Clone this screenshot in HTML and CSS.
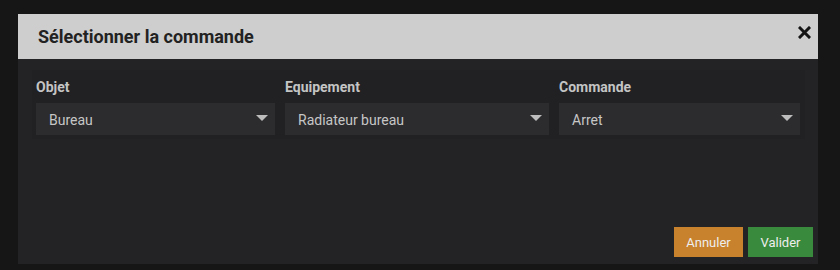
FILE: index.html
```html
<!DOCTYPE html>
<html lang="fr">
<head>
  <meta charset="UTF-8" />
  <meta name="viewport" content="width=device-width, initial-scale=1.0"/>
  <title>Sélectionner la commande</title>
  <link rel="stylesheet" href="styles.css">
</head>
<body>

  <div class="modal">
    <!-- Header -->
    <div class="modal-header">
      <h1>Sélectionner la commande</h1>
      <button class="close" title="Fermer">
        <svg width="13" height="13" viewBox="0 0 13 13">
          <path d="M2 2 L11 11 M11 2 L2 11" stroke="#151515" stroke-width="3" stroke-linecap="square"/>
        </svg>
      </button>
    </div>

    <!-- Body -->
    <div class="modal-body">
      <div class="form-row">
        <div class="form-group">
          <label>Objet</label>
          <div class="select">
            <span>Bureau</span>
            <svg class="caret" width="12" height="6" viewBox="0 0 12 6"><path d="M0 0 L12 0 L6 6 Z" fill="#bdbdbd"/></svg>
          </div>
        </div>
        <div class="form-group">
          <label>Equipement</label>
          <div class="select">
            <span>Radiateur bureau</span>
            <svg class="caret" width="12" height="6" viewBox="0 0 12 6"><path d="M0 0 L12 0 L6 6 Z" fill="#bdbdbd"/></svg>
          </div>
        </div>
        <div class="form-group">
          <label>Commande</label>
          <div class="select">
            <span>Arret</span>
            <svg class="caret" width="12" height="6" viewBox="0 0 12 6"><path d="M0 0 L12 0 L6 6 Z" fill="#bdbdbd"/></svg>
          </div>
        </div>
      </div>
    </div>

    <!-- Footer -->
    <div class="modal-footer">
      <button class="btn btn-warning">Annuler</button>
      <button class="btn btn-success">Valider</button>
    </div>
  </div>

</body>
</html>
```

FILE: styles.css
```css
body {
  font-family: Roboto, 'Liberation Sans', Arial, sans-serif;
  background-color: #161616;
  margin: 0;
  padding: 14px 0 0 18px;
  color: #ccc;
}

.modal {
  width: 800px;
  height: 250px;
  background-color: #232325;
  display: flex;
  flex-direction: column;
}

.modal-header {
  height: 45px;
  background-color: #cecece;
  display: flex;
  justify-content: space-between;
  align-items: center;
  padding: 0 7px 0 20px;
  box-sizing: border-box;
}

.modal-header h1 {
  margin: 0;
  font-size: 18px;
  font-weight: 700;
  color: #222;
}

.close {
  background: none;
  border: none;
  padding: 0;
  margin-top: -8px;
  cursor: pointer;
  display: flex;
}

.modal-body {
  padding: 11px 13px 0 14px;
}

.form-row {
  background-color: #212123;
  padding: 8px 5px 4px 4px;
  display: grid;
  grid-template-columns: 239fr 264fr 241fr;
  gap: 10px;
}

.form-group label {
  display: block;
  font-size: 14px;
  font-weight: 700;
  line-height: 18px;
  color: #c4c4c4;
  margin-bottom: 7px;
}

.select {
  height: 32px;
  background-color: #2c2c2e;
  display: flex;
  justify-content: space-between;
  align-items: center;
  padding: 0 7px 0 13px;
  font-size: 14px;
  color: #c6c6c6;
}

.select span {
  margin-top: 1px;
}

.caret {
  margin-top: -3px;
}

.modal-footer {
  margin-top: auto;
  display: flex;
  justify-content: flex-end;
  gap: 5px;
  padding: 0 5px 7px 0;
}

.btn {
  height: 30px;
  border: none;
  padding: 0 12px;
  font-family: inherit;
  font-size: 13px;
  color: #eee;
  cursor: pointer;
}

.btn-warning {
  background-color: #c8812c;
  width: 69px;
}

.btn-success {
  background-color: #3a8a3d;
  width: 65px;
}
```
